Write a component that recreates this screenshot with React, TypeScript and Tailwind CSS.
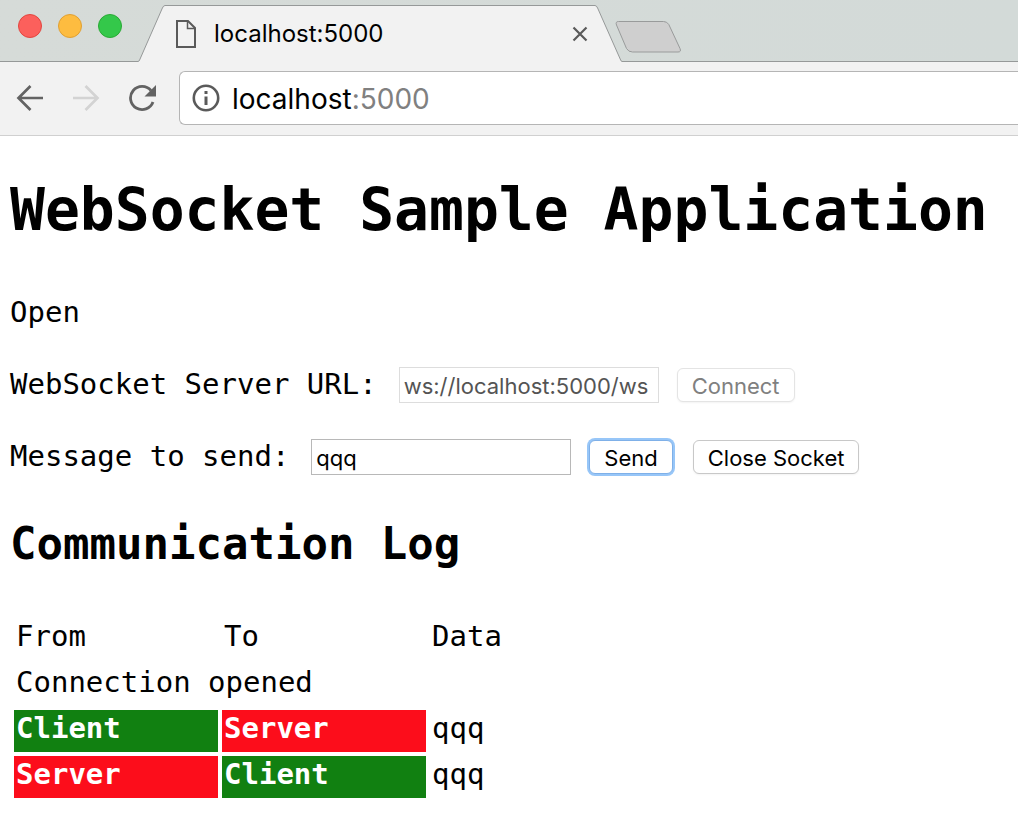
import { useState } from "react";

type Party = "Client" | "Server";

const entries: { from: Party; to: Party; data: string }[] = [
  { from: "Client", to: "Server", data: "qqq" },
  { from: "Server", to: "Client", data: "qqq" },
];

function TabStrip() {
  return (
    <div className="flex h-[62px] items-end bg-gradient-to-r from-[#d6dbd8] to-[#d3dad8]">
      <div className="flex h-full w-[138px] shrink-0 gap-4 border-b border-[#969999] pl-[18px] pt-[14px]">
        <button aria-label="Close window" className="size-6 rounded-full border border-[#e2463f] bg-[#fc605c]" />
        <button aria-label="Minimize window" className="size-6 rounded-full border border-[#e0a033] bg-[#fdbc40]" />
        <button aria-label="Zoom window" className="size-6 rounded-full border border-[#2aaa35] bg-[#34c84a]" />
      </div>
      <div className="flex h-[57px] w-[484px]">
        <svg className="h-[57px] w-[27px] shrink-0" viewBox="0 0 27 57" fill="none">
          <path d="M0 57V56.500Q1 56.500 1.600 55L24.400 3Q25.500 .5 27 .5V57Z" fill="#f2f2f2" />
          <path d="M0 56.500Q1 56.500 1.600 55L24.400 3Q25.500 .5 27 .5" stroke="#969999" />
        </svg>
        <div className="flex min-w-0 grow items-center border-t border-[#969999] bg-[#f2f2f2] pl-[11px]">
          <svg className="h-7 w-5 shrink-0" viewBox="0 0 20 28" fill="none" stroke="#5a5a5a" strokeWidth="2">
            <path d="M1 1H12L19 8V27H1Z" />
            <path d="M11.500 1V8.500H19" strokeWidth="1.500" />
          </svg>
          <span className="grow pl-[18px] text-[24px] leading-8 text-black">localhost:5000</span>
          <button aria-label="Close tab" className="mr-[7px] flex size-4 items-center justify-center">
            <svg className="size-4" viewBox="0 0 16 16" stroke="#5a5a5a" strokeWidth="2.200">
              <path d="M1.500 1.500L14.500 14.500M14.500 1.500L1.500 14.500" />
            </svg>
          </button>
        </div>
        <svg className="h-[57px] w-[27px] shrink-0" viewBox="0 0 27 57" fill="none">
          <path d="M0 57V.5Q1.500 .5 2.600 3L25.200 54Q26 56.500 27 56.500V57Z" fill="#f2f2f2" />
          <path d="M0 .5Q1.500 .5 2.600 3L25.200 54Q26 56.500 27 56.500" stroke="#969999" />
        </svg>
      </div>
      <div className="h-full grow border-b border-[#969999] pt-5">
        <button aria-label="New tab" className="-ml-2 block">
          <svg className="h-[34px] w-[68px]" viewBox="0 0 68 34">
            <path
              d="M4.500 1.500H49.500Q53 1.500 54.800 4.500L66 28.500Q67.500 32 64 32H18.500Q14.500 32 12.500 28.500L2.500 5Q1.200 1.500 4.500 1.500Z"
              fill="#cfcfcf"
              stroke="#999b9b"
            />
          </svg>
        </button>
      </div>
    </div>
  );
}

function Toolbar() {
  return (
    <div className="flex h-[74px] items-center border-b border-[#d0d0d0] bg-[#f2f2f2] pb-[2px] pl-4">
      <button aria-label="Back">
        <svg className="size-7" viewBox="0 0 28 28" fill="none" stroke="#636363" strokeWidth="2.700">
          <path d="M27 14H3M14.500 2L2.500 14L14.500 26" />
        </svg>
      </button>
      <button aria-label="Forward" disabled className="ml-7">
        <svg className="size-7" viewBox="0 0 28 28" fill="none" stroke="#d3d3d3" strokeWidth="2.700">
          <path d="M1 14H25M13.500 2L25.500 14L13.500 26" />
        </svg>
      </button>
      <button aria-label="Reload" className="ml-7">
        <svg className="size-7" viewBox="0 0 28 28" fill="none">
          <path d="M23 6.500A11.600 11.600 0 1 0 25 18" stroke="#636363" strokeWidth="2.800" />
          <path d="M28 1V12.500H16.500Z" fill="#636363" />
        </svg>
      </button>
      <div className="ml-[23px] flex h-[54px] grow items-center rounded-l-md border border-r-0 border-[#b5b5b5] bg-white pl-3">
        <svg className="size-7 shrink-0" viewBox="0 0 28 28" fill="none">
          <circle cx="14" cy="14" r="12.200" stroke="#5a5a5a" strokeWidth="2.600" />
          <path d="M14 7V10M14 12.500V21" stroke="#5a5a5a" strokeWidth="3" />
        </svg>
        <span className="pl-3 pt-[2px] text-[28px] leading-9 text-black">
          localhost<span className="text-[#808080]">:5000</span>
        </span>
      </div>
    </div>
  );
}

function PartyCell({ name }: { name: Party }) {
  return (
    <td className={`px-[2px] pb-[6px] pt-0 font-bold text-white ${name === "Client" ? "bg-[#118011]" : "bg-[#fc0d1b]"}`}>{name}</td>
  );
}

export default function App() {
  const [url, setUrl] = useState("ws://localhost:5000/ws");
  const [message, setMessage] = useState("qqq");

  return (
    <div className="min-h-screen overflow-x-hidden bg-white font-['Inter',sans-serif]">
      <header>
        <TabStrip />
        <Toolbar />
      </header>
      <main className="px-[10px] pt-9 font-['DejaVu_Sans_Mono',monospace] text-[29px] leading-9 text-black">
        <h1 className="whitespace-nowrap text-[58px] font-bold leading-[76px]">WebSocket Sample Application</h1>
        <p className="mt-[46px]">Open</p>
        <div className="mt-9 flex items-start gap-[22px] whitespace-nowrap">
          <label htmlFor="url">WebSocket Server URL:</label>
          <div className="flex items-center pt-px">
            <input
              id="url"
              disabled
              value={url}
              onChange={(e) => setUrl(e.target.value)}
              className="h-9 w-[260px] border border-[#dddddd] bg-white px-1 pt-[2px] font-['Inter',sans-serif] text-[22px] text-[#545454]"
            />
            <button
              disabled
              className="ml-[18px] h-[34px] rounded-md border border-[#e4e4e4] bg-white px-[14px] pt-[2px] font-['Inter',sans-serif] text-[22px] leading-[30px] text-[#808080] shadow-xs"
            >
              Connect
            </button>
          </div>
        </div>
        <div className="mt-[35px] flex items-start gap-[22px] whitespace-nowrap">
          <label htmlFor="message">Message to send:</label>
          <div className="flex items-center pt-px">
            <input
              id="message"
              value={message}
              onChange={(e) => setMessage(e.target.value)}
              className="h-9 w-[260px] border border-[#b8b8b8] bg-white px-1 pt-[2px] font-['Inter',sans-serif] text-[22px] text-black"
            />
            <button className="ml-[18px] h-[34px] rounded-md border border-[#7fb0e8] bg-white px-[14px] pt-[2px] font-['Inter',sans-serif] text-[22px] leading-[30px] ring-2 ring-[#97c6f8]">
              Send
            </button>
            <button className="ml-5 h-[34px] rounded-md border border-[#c8c8c8] bg-white px-[14px] pt-[2px] font-['Inter',sans-serif] text-[22px] leading-[30px] shadow-xs">
              Close Socket
            </button>
          </div>
        </div>
        <h2 className="mt-[41px] whitespace-nowrap text-[44px] font-bold leading-[56px]">Communication Log</h2>
        <table className="mt-[42px] border-separate border-spacing-1 text-left leading-9">
          <thead>
            <tr>
              <th className="w-[204px] px-[2px] pb-[6px] pt-0 font-normal">From</th>
              <th className="w-[204px] px-[2px] pb-[6px] pt-0 font-normal">To</th>
              <th className="px-[2px] pb-[6px] pt-0 font-normal">Data</th>
            </tr>
          </thead>
          <tbody>
            <tr>
              <td colSpan={3} className="px-[2px] pb-[6px] pt-0">Connection opened</td>
            </tr>
            {entries.map((entry, i) => (
              <tr key={i}>
                <PartyCell name={entry.from} />
                <PartyCell name={entry.to} />
                <td className="px-[2px] pb-[6px] pt-0">{entry.data}</td>
              </tr>
            ))}
          </tbody>
        </table>
      </main>
    </div>
  );
}
